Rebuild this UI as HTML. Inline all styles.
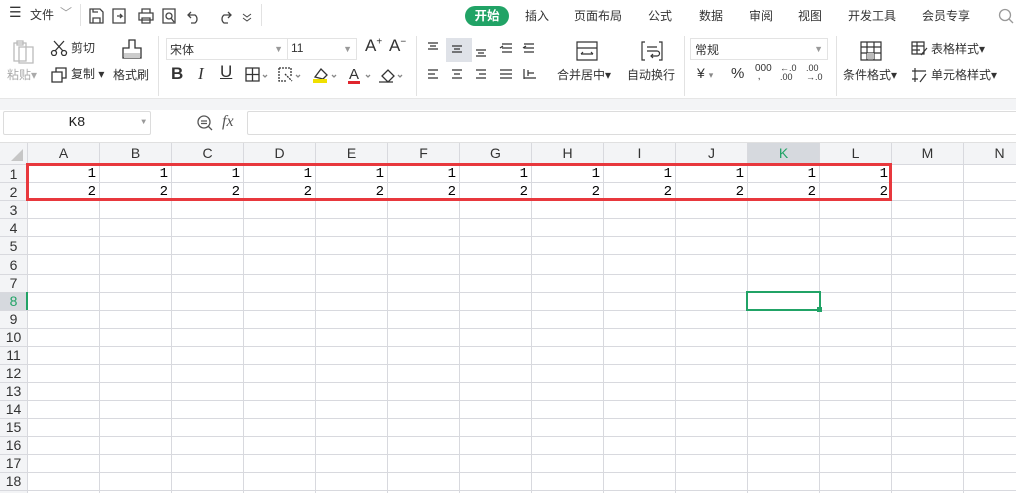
<!DOCTYPE html>
<html><head><meta charset="utf-8"><style>
*{margin:0;padding:0;box-sizing:border-box}
body{width:1016px;height:493px;overflow:hidden;background:#fff;font-family:"Liberation Sans","Noto Sans CJK SC",sans-serif;font-size:12px;color:#333;position:relative}
.a{position:absolute;white-space:nowrap}
.t{font-size:12px;color:#333}
.sep{position:absolute;width:1px;background:#e2e2e2}
.ch{position:absolute;top:143px;height:21px;text-align:center;font-size:14px;color:#333;line-height:21px;border-right:1px solid #d4d4d8}
.rh{position:absolute;left:0;width:27px;text-align:center;font-size:14px;color:#333;line-height:18px}
.v{position:absolute;width:1px;background:#d8d9de;top:143px;height:350px}
.h{position:absolute;height:1px;background:#d8d9de;left:0;width:1016px}
.n{position:absolute;font-family:"Liberation Mono",monospace;font-size:14px;color:#000;text-align:right;width:70px;line-height:18px}
svg{position:absolute}
</style></head><body>
<div class="a t" style="left:9px;top:4px;font-size:14px">☰</div>
<div class="a t" style="left:30px;top:6px">文件</div>
<div class="a" style="left:60px;top:4px;color:#999">﹀</div>
<div class="sep" style="left:80px;top:4px;height:22px"></div>
<svg style="left:88px;top:7px" width="170" height="18" fill="none" stroke="#444" stroke-width="1.3">
<path d="M2 2h10l3 3v11H2z M5 16v-5h7v5 M5 2v3h5"/>
<path d="M25 2h12v14H25z M29 9h5l-2-2 M34 9l-2 2"/>
<path d="M51 6h14v7H51z M54 6V2h8v4 M54 11h8v5h-8z"/>
<path d="M75 2h12v14H75z M81 6a3 3 0 1 1 0 6a3 3 0 1 1 0-6 M83 11l3 4"/>
<path d="M103 5l-3 3 3 3 M100 8h7a5 5 0 0 1 0 8h-4"/>
<path d="M140 5l3 3-3 3 M143 8h-7a5 5 0 0 0 0 8h4"/>
<path d="M155 7l4 3 4-3 M155 11l4 3 4-3" stroke-width="1"/>
</svg>
<div class="sep" style="left:261px;top:4px;height:22px"></div>
<div class="a" style="left:465px;top:6px;width:44px;height:20px;border-radius:10px;background:#21a366;color:#fff;text-align:center;line-height:20px;font-weight:bold;font-size:12.5px">开始</div>
<div class="a t" style="left:525px;top:7px">插入</div>
<div class="a t" style="left:574px;top:7px">页面布局</div>
<div class="a t" style="left:648px;top:7px">公式</div>
<div class="a t" style="left:699px;top:7px">数据</div>
<div class="a t" style="left:749px;top:7px">审阅</div>
<div class="a t" style="left:798px;top:7px">视图</div>
<div class="a t" style="left:848px;top:7px">开发工具</div>
<div class="a t" style="left:922px;top:7px">会员专享</div>
<svg style="left:998px;top:8px" width="18" height="18" fill="none" stroke="#999" stroke-width="1.3"><circle cx="7" cy="7" r="5.5"/><path d="M11 11l4 4"/></svg>
<svg style="left:12px;top:40px" width="24" height="24" fill="none" stroke="#bbb" stroke-width="1.3"><path d="M2 3h12v18H2z M7 7h14v16H7z M5 1h6v4H5z"/></svg>
<div class="a" style="left:7px;top:66px;color:#aaa">粘贴▾</div>
<svg style="left:50px;top:40px" width="18" height="16" fill="none" stroke="#333" stroke-width="1.3"><circle cx="4" cy="13" r="2.5"/><circle cx="14" cy="13" r="2.5"/><path d="M5 11L14 1 M13 11L4 1"/></svg>
<div class="a t" style="left:71px;top:39px">剪切</div>
<svg style="left:51px;top:67px" width="16" height="16" fill="none" stroke="#333" stroke-width="1.3"><path d="M1 5h10v10H1z M5 5V1h10v10h-4"/></svg>
<div class="a t" style="left:71px;top:65px">复制 ▾</div>
<svg style="left:120px;top:38px" width="24" height="28" fill="none" stroke="#333" stroke-width="1.3"><path d="M9 2h6v8h6v10H3V10h6z"/><rect x="4" y="15" width="16" height="5" fill="#ccc" stroke="none"/></svg>
<div class="a t" style="left:113px;top:66px">格式刷</div>
<div class="sep" style="left:158px;top:36px;height:60px"></div>
<div class="a" style="left:166px;top:38px;width:122px;height:22px;border:1px solid #e3e3e3;padding:2px 3px">宋体<span style="position:absolute;right:4px;color:#999;font-size:9px;top:5px">▼</span></div>
<div class="a" style="left:287px;top:38px;width:70px;height:22px;border:1px solid #e3e3e3;padding:2px 3px">11<span style="position:absolute;right:4px;color:#999;font-size:9px;top:5px">▼</span></div>
<div class="a" style="left:365px;top:36px;font-size:17px">A<sup style="font-size:10px">+</sup></div>
<div class="a" style="left:389px;top:36px;font-size:17px">A<sup style="font-size:10px">−</sup></div>
<div class="a" style="left:171px;top:64px;font-size:17px;font-weight:bold">B</div>
<div class="a" style="left:198px;top:64px;font-size:17px;font-style:italic;font-family:'Liberation Serif',serif">I</div>
<div class="a" style="left:220px;top:62px;font-size:17px;text-decoration:underline">U</div>
<svg style="left:245px;top:67px" width="170" height="18" fill="none" stroke="#333" stroke-width="1.3">
<path d="M1 1h13v13H1z M7.5 1v13 M1 7.5h13"/><path d="M18 8l2 2 2-2" stroke="#888"/>
<path d="M34 1h12v9 M34 1v13h8 M40 7l7 7" stroke-dasharray="2 1"/><path d="M51 8l2 2 2-2" stroke="#888"/>
<path d="M70 10l6-8 6 6-4 4z"/><rect x="68" y="12" width="14" height="4" fill="#f0e000" stroke="none"/><path d="M87 8l2 2 2-2" stroke="#888"/>
<text x="104" y="12" font-size="15" fill="#333" stroke="none" font-family="Liberation Sans">A</text><rect x="103" y="14" width="12" height="3" fill="#e0252d" stroke="none"/><path d="M121 8l2 2 2-2" stroke="#888"/>
<path d="M137 9l6-6 6 6-6 6z M134 15h14"/><path d="M153 8l2 2 2-2" stroke="#888"/>
</svg>
<div class="sep" style="left:416px;top:36px;height:60px"></div>
<div class="a" style="left:446px;top:38px;width:26px;height:24px;background:#dfe2e8"></div>
<svg style="left:424px;top:40px" width="120" height="44" fill="none" stroke="#333" stroke-width="1.2">
<path d="M4 3h10 M6 6h6 M4 9h10"/><path d="M28 6h10 M30 9h6 M28 12h10"/><path d="M52 10h10 M54 13h6 M52 16h10"/><path d="M78 4h10 M78 8h10 M78 12h10 M76 8l3-2"/><path d="M100 4h10 M100 8h10 M100 12h10 M99 8l3-2"/>
<path d="M4 30h10 M4 34h7 M4 38h10"/><path d="M28 30h10 M30 34h6 M28 38h10"/><path d="M52 30h10 M55 34h7 M52 38h10"/><path d="M76 30h12 M76 34h12 M76 38h12"/><path d="M100 29v10 M100 38h12 M104 33h6 M104 30v6"/>
</svg>
<svg style="left:575px;top:40px" width="24" height="22" fill="none" stroke="#333" stroke-width="1.2"><path d="M2 2h20v18H2z M2 8h20 M6 14h12 M6 14l2-2 M18 14l-2-2"/></svg>
<div class="a t" style="left:557px;top:66px">合并居中▾</div>
<svg style="left:640px;top:40px" width="24" height="22" fill="none" stroke="#333" stroke-width="1.2"><path d="M5 2H2v18h3 M19 2h3v18h-3 M7 7h10 M7 11h10a2 2 0 0 1 0 5h-6 M13 14l-2 2 2 2"/></svg>
<div class="a t" style="left:627px;top:66px">自动换行</div>
<div class="sep" style="left:684px;top:36px;height:60px"></div>
<div class="a" style="left:690px;top:38px;width:138px;height:22px;border:1px solid #e3e3e3;padding:2px 4px">常规<span style="position:absolute;right:4px;color:#999;font-size:9px;top:5px">▼</span></div>
<div class="a" style="left:697px;top:65px;font-size:14px">¥ <span style="font-size:9px;color:#888">▾</span></div>
<div class="a" style="left:731px;top:65px;font-size:15px">%</div>
<div class="a" style="left:755px;top:65px;font-size:10px;line-height:8px">000<br>&nbsp;,</div>
<div class="a" style="left:780px;top:64px;font-size:9px;line-height:9px">←.0<br>.00</div>
<div class="a" style="left:806px;top:64px;font-size:9px;line-height:9px">.00<br>→.0</div>
<div class="sep" style="left:836px;top:36px;height:60px"></div>
<svg style="left:860px;top:41px" width="22" height="20" fill="none" stroke="#333" stroke-width="1.2"><path d="M1 1h20v18H1z M1 6h20 M1 12h20 M7 1v18 M14 1v18"/><rect x="7" y="12" width="7" height="6" fill="#bbb" stroke="none"/></svg>
<div class="a t" style="left:843px;top:66px">条件格式▾</div>
<svg style="left:911px;top:41px" width="18" height="16" fill="none" stroke="#333" stroke-width="1.2"><path d="M1 1h12v12H1z M1 5h12 M1 9h8 M6 1v12 M10 14l6-7"/></svg>
<div class="a t" style="left:931px;top:40px">表格样式▾</div>
<svg style="left:911px;top:67px" width="18" height="16" fill="none" stroke="#333" stroke-width="1.2"><path d="M1 4h14 M4 1v14 M1 12h6 M9 15l6-8"/></svg>
<div class="a t" style="left:931px;top:66px">单元格样式▾</div>
<div class="a" style="left:0;top:98px;width:1016px;height:12px;background:#f3f4f6;border-top:1px solid #e6e6e6"></div>
<div class="a" style="left:0;top:110px;width:1016px;height:33px;background:#fff;border-bottom:1px solid #e0e0e0"></div>
<div class="a" style="left:3px;top:111px;width:148px;height:24px;border:1px solid #dcdcdc;border-radius:2px;text-align:center;line-height:22px;font-family:'Liberation Mono',monospace;font-size:14px;color:#222">K8<span style="position:absolute;right:4px;color:#999;font-size:8px">▼</span></div>
<svg style="left:196px;top:114px" width="18" height="18" fill="none" stroke="#555" stroke-width="1.3"><circle cx="8" cy="8" r="6"/><path d="M5 7h6 M5 9.5h6 M12 12l4 4"/></svg>
<div class="a" style="left:222px;top:113px;font-size:16px;font-style:italic;font-family:'Liberation Serif',serif;color:#555">fx</div>
<div class="a" style="left:247px;top:111px;width:780px;height:24px;border:1px solid #dcdcdc;border-radius:2px"></div>
<div class="a" style="left:0;top:143px;width:1016px;height:21px;background:#f3f4f6"></div>
<div class="a" style="left:0;top:164px;width:27px;height:329px;background:#f3f4f6"></div>
<svg style="left:10px;top:148px" width="14" height="14"><path d="M13 1v12H1z" fill="#c6c6c6"/></svg>
<div class="a" style="left:748px;top:143px;width:72px;height:21px;background:#d6d9de"></div>
<div class="a" style="left:0;top:292px;width:27px;height:18px;background:#d6d9de"></div>
<div class="ch" style="left:28px;width:72px">A</div><div class="ch" style="left:100px;width:72px">B</div><div class="ch" style="left:172px;width:72px">C</div><div class="ch" style="left:244px;width:72px">D</div><div class="ch" style="left:316px;width:72px">E</div><div class="ch" style="left:388px;width:72px">F</div><div class="ch" style="left:460px;width:72px">G</div><div class="ch" style="left:532px;width:72px">H</div><div class="ch" style="left:604px;width:72px">I</div><div class="ch" style="left:676px;width:72px">J</div><div class="ch" style="left:748px;width:72px;color:#21a366">K</div><div class="ch" style="left:820px;width:72px">L</div><div class="ch" style="left:892px;width:72px">M</div><div class="ch" style="left:964px;width:72px">N</div>
<div class="v" style="left:27px"></div><div class="v" style="left:99px"></div><div class="v" style="left:171px"></div><div class="v" style="left:243px"></div><div class="v" style="left:315px"></div><div class="v" style="left:387px"></div><div class="v" style="left:459px"></div><div class="v" style="left:531px"></div><div class="v" style="left:603px"></div><div class="v" style="left:675px"></div><div class="v" style="left:747px"></div><div class="v" style="left:819px"></div><div class="v" style="left:891px"></div><div class="v" style="left:963px"></div>
<div class="h" style="top:164px"></div><div class="h" style="top:182px"></div><div class="h" style="top:200px"></div><div class="h" style="top:218px"></div><div class="h" style="top:236px"></div><div class="h" style="top:254px"></div><div class="h" style="top:274px"></div><div class="h" style="top:292px"></div><div class="h" style="top:310px"></div><div class="h" style="top:328px"></div><div class="h" style="top:346px"></div><div class="h" style="top:364px"></div><div class="h" style="top:382px"></div><div class="h" style="top:400px"></div><div class="h" style="top:418px"></div><div class="h" style="top:436px"></div><div class="h" style="top:454px"></div><div class="h" style="top:472px"></div><div class="h" style="top:490px"></div>
<div class="rh" style="top:165px">1</div><div class="rh" style="top:183px">2</div><div class="rh" style="top:201px">3</div><div class="rh" style="top:219px">4</div><div class="rh" style="top:237px">5</div><div class="rh" style="top:256px">6</div><div class="rh" style="top:274px">7</div><div class="rh" style="top:292px;color:#21a366">8</div><div class="rh" style="top:310px">9</div><div class="rh" style="top:328px">10</div><div class="rh" style="top:346px">11</div><div class="rh" style="top:364px">12</div><div class="rh" style="top:382px">13</div><div class="rh" style="top:400px">14</div><div class="rh" style="top:418px">15</div><div class="rh" style="top:436px">16</div><div class="rh" style="top:454px">17</div><div class="rh" style="top:472px">18</div>
<div class="a" style="left:26px;top:292px;width:2px;height:18px;background:#21a366"></div>
<div class="n" style="left:26px;top:165px">1</div><div class="n" style="left:98px;top:165px">1</div><div class="n" style="left:170px;top:165px">1</div><div class="n" style="left:242px;top:165px">1</div><div class="n" style="left:314px;top:165px">1</div><div class="n" style="left:386px;top:165px">1</div><div class="n" style="left:458px;top:165px">1</div><div class="n" style="left:530px;top:165px">1</div><div class="n" style="left:602px;top:165px">1</div><div class="n" style="left:674px;top:165px">1</div><div class="n" style="left:746px;top:165px">1</div><div class="n" style="left:818px;top:165px">1</div>
<div class="n" style="left:26px;top:183px">2</div><div class="n" style="left:98px;top:183px">2</div><div class="n" style="left:170px;top:183px">2</div><div class="n" style="left:242px;top:183px">2</div><div class="n" style="left:314px;top:183px">2</div><div class="n" style="left:386px;top:183px">2</div><div class="n" style="left:458px;top:183px">2</div><div class="n" style="left:530px;top:183px">2</div><div class="n" style="left:602px;top:183px">2</div><div class="n" style="left:674px;top:183px">2</div><div class="n" style="left:746px;top:183px">2</div><div class="n" style="left:818px;top:183px">2</div>
<div class="a" style="left:26px;top:163px;width:866px;height:38px;border:3px solid #e8383d"></div>
<div class="a" style="left:746px;top:291px;width:75px;height:20px;border:2px solid #21a366"></div>
<div class="a" style="left:817px;top:307px;width:5px;height:5px;background:#21a366"></div>
</body></html>
